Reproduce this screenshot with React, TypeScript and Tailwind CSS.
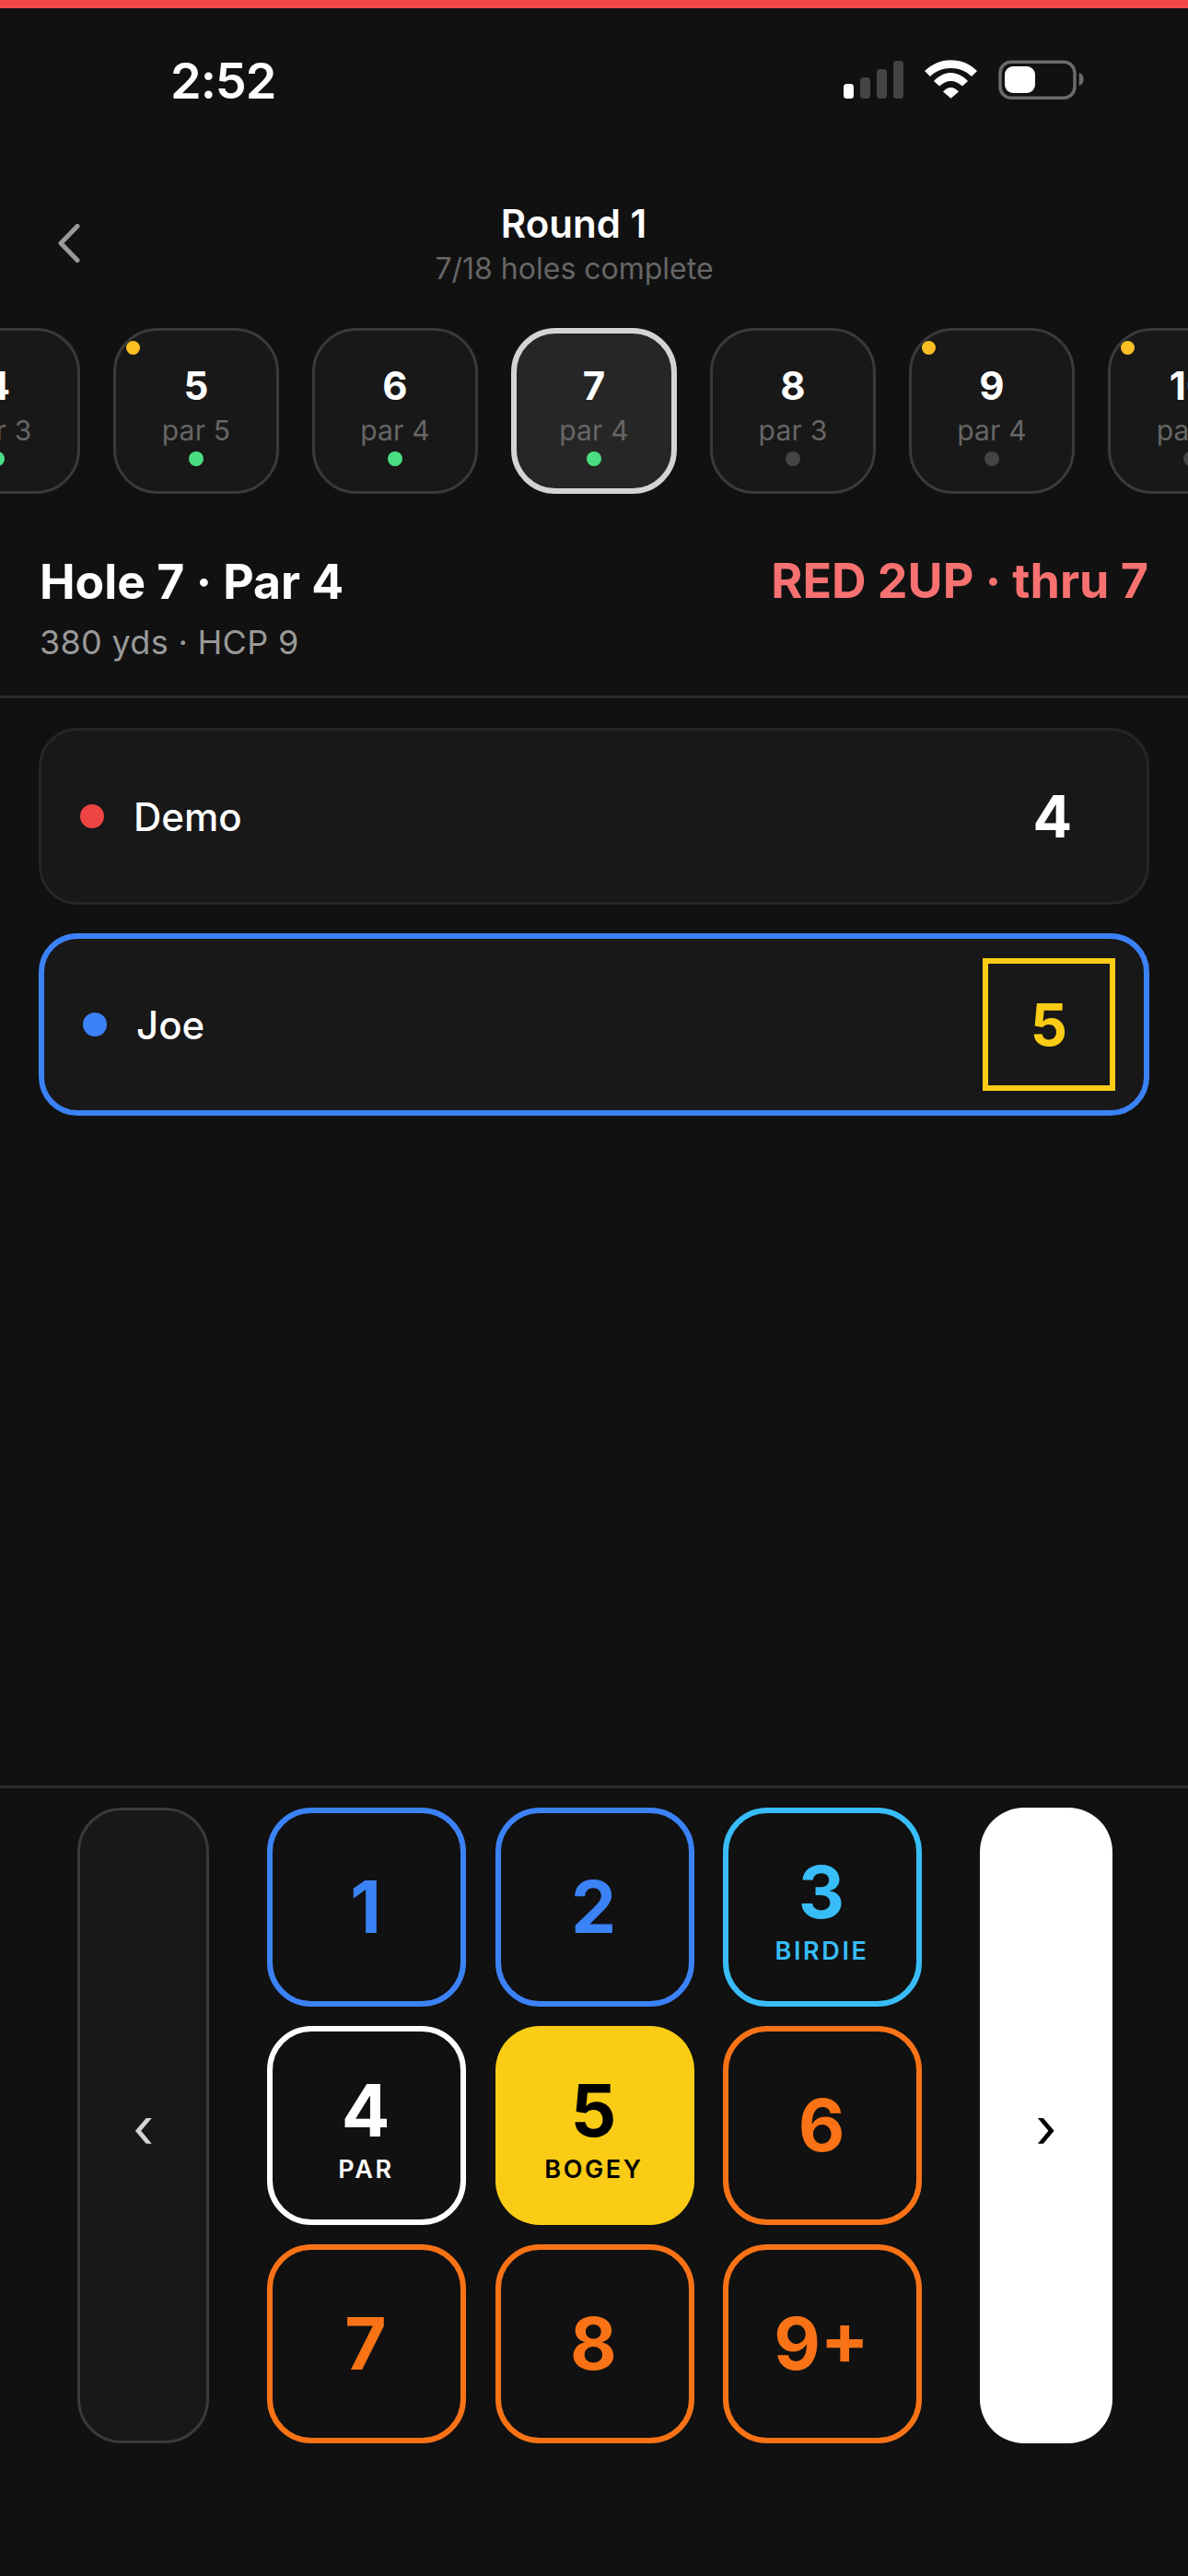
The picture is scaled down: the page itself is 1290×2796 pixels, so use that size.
const holes = [
  { n: '4', par: 'par 3', flag: false, done: true },
  { n: '5', par: 'par 5', flag: true, done: true },
  { n: '6', par: 'par 4', flag: false, done: true },
  { n: '7', par: 'par 4', flag: false, done: true, active: true },
  { n: '8', par: 'par 3', flag: false, done: false },
  { n: '9', par: 'par 4', flag: true, done: false },
  { n: '10', par: 'par 5', flag: true, done: false },
];

function HoleTile({ h }: { h: (typeof holes)[number] }) {
  return (
    <div
      className={
        h.active
          ? 'relative flex h-[180px] w-[180px] shrink-0 flex-col items-center rounded-[48px] border-[6px] border-[#d4d4d4] bg-[#262626] pt-[30px]'
          : 'relative flex h-[180px] w-[180px] shrink-0 flex-col items-center rounded-[48px] border-[3px] border-[#3a3a3a] bg-[#181818] pt-[33px]'
      }
    >
      {h.flag && <span className="absolute left-[11px] top-[11px] h-[15px] w-[15px] rounded-full bg-[#fbbf24]" />}
      <span className="text-[42px] font-bold leading-[54px] text-white">{h.n}</span>
      <span className="mt-[3px] text-[30px] leading-[36px] tracking-[0.2px] text-[#666666]">{h.par}</span>
      <span className={h.done ? 'mt-[5px] h-[16px] w-[16px] rounded-full bg-[#4ade80]' : 'mt-[5px] h-[16px] w-[16px] rounded-full bg-[#444444]'} />
    </div>
  );
}

function Key({ n, label, cls, labelCls }: { n: string; label?: string; cls: string; labelCls?: string }) {
  return (
    <div className={'flex h-[216px] w-[216px] flex-col items-center justify-center rounded-[48px] ' + (label ? 'pt-[7px] ' : '') + cls}>
      <span className="pr-[2px] text-[78px] font-bold leading-[78px]">{n}</span>
      {label && <span className={'mt-[10px] pr-[1px] text-[27px] font-semibold leading-[30px] tracking-[2.6px] ' + labelCls}>{label}</span>}
    </div>
  );
}

export default function App() {
  return (
    <div className="flex h-[2796px] w-[1290px] flex-col overflow-hidden bg-[#111111] text-white [font-family:Inter,'Liberation_Sans',sans-serif]">
      <div className="h-[9px] shrink-0 bg-[#f34848]" />

      <div className="flex h-[186px] shrink-0 items-start justify-between pl-[185px] pr-[112px] pt-[46px]">
        <span className="text-[54px] font-semibold leading-[66px] tracking-[-1px]">2:52</span>
        <svg width="262" height="44" viewBox="0 0 262 44" className="mt-[10px]">
          <rect x="0" y="26" width="11" height="16" rx="3.5" fill="#fff" />
          <rect x="18" y="19" width="11" height="23" rx="3.5" fill="#444" />
          <rect x="36" y="10" width="11" height="32" rx="3.5" fill="#444" />
          <rect x="54" y="1" width="11" height="41" rx="3.5" fill="#444" />
          <path d="M88 12 L94 18 C100 12 108 9 116.500 9 C125 9 133 12 139 18 L145 12 C137 4 127 0.300 116.500 0.300 C106 0.300 96 4 88 12 Z" fill="#fff" />
          <path d="M98 23 L104 28.500 C108 25 112 23 116.500 23 C121 23 125 25 129 28.500 L135 23 C130 17.500 123 14 116.500 14 C110 14 103 17.500 98 23 Z" fill="#fff" />
          <path d="M108 34.500 C110.500 32 113.500 30 116.500 30 C119.500 30 122.500 32 125 34.500 L116.500 41.700 Z" fill="#fff" />
          <rect x="170" y="2.300" width="81" height="39" rx="12" fill="none" stroke="#6b6b6b" strokeWidth="3.500" />
          <rect x="175" y="7" width="33" height="29" rx="9" fill="#fff" />
          <path d="M255.700 14 C259.500 15 260.700 18.500 260.700 21 C260.700 23.500 259.500 27 255.700 28 Z" fill="#6b6b6b" />
        </svg>
      </div>

      <div className="relative flex h-[130px] shrink-0 flex-col items-center pr-[43px] pt-[24px]">
        <svg width="36" height="42" viewBox="0 0 36 42" className="absolute left-[54px] top-[48px]" fill="none">
          <path d="M30 2.500 L12 21 L30 39.500" stroke="#999999" strokeWidth="5" strokeLinecap="round" strokeLinejoin="round" />
        </svg>
        <span className="pr-[1px] text-[42px] font-semibold leading-[48px]">Round 1</span>
        <span className="mt-[7px] text-[32px] leading-[36px] text-[#666666]">7/18 holes complete</span>
      </div>

      <div className="-ml-[93px] flex shrink-0 gap-[36px] pt-[31px]">
        {holes.map((h) => (
          <HoleTile key={h.n} h={h} />
        ))}
      </div>

      <div className="flex shrink-0 items-start justify-between border-b-[3px] border-[#2a2a2a] px-[43px] pb-[35px] pt-[65px]">
        <div>
          <div className="text-[51.700px] font-bold leading-[60px]">Hole 7 · Par 4</div>
          <div className="mt-[14px] text-[36px] leading-[45px] tracking-[0.3px] text-[#999999]">380 yds · HCP 9</div>
        </div>
        <div className="text-[52px] font-bold leading-[60px] text-[#f87171]">RED 2UP · thru 7</div>
      </div>

      <div className="flex flex-1 flex-col gap-[31px] px-[42px] pt-[32px]">
        <div className="flex h-[192px] items-center justify-between rounded-[42px] border-[3px] border-[#262626] bg-[#181818] pl-[42px] pr-[81px]">
          <div className="flex items-center gap-[32px]">
            <span className="h-[26px] w-[26px] rounded-full bg-[#ef4444]" />
            <span className="text-[42px] font-medium">Demo</span>
          </div>
          <span className="text-[63px] font-bold">4</span>
        </div>
        <div className="flex h-[198px] items-center justify-between rounded-[42px] border-[6px] border-[#3b82f6] bg-[#181818] pl-[42px] pr-[31px]">
          <div className="flex items-center gap-[32px]">
            <span className="h-[26px] w-[26px] rounded-full bg-[#3b82f6]" />
            <span className="text-[42px] font-medium">Joe</span>
          </div>
          <div className="flex h-[144px] w-[144px] items-center justify-center border-[6px] border-[#facc15] text-[63px] font-bold text-[#facc15]">5</div>
        </div>
      </div>

      <div className="flex h-[858px] shrink-0 gap-[63px] border-t-[3px] border-[#2a2a2a] pl-[84px] pt-[21px]">
        <div className="flex h-[690px] w-[143px] items-center justify-center rounded-[48px] border-[3px] border-[#3a3a3a] bg-[#181818] pt-[3px] text-[60px] text-[#d4d4d4]">‹</div>
        <div className="grid h-[690px] grid-cols-[216px_216px_216px] gap-x-[31.5px] gap-y-[21px]">
          <Key n="1" cls="border-[6px] border-[#3b82f6] text-[#3b82f6]" />
          <Key n="2" cls="border-[6px] border-[#3b82f6] text-[#3b82f6]" />
          <Key n="3" label="BIRDIE" cls="border-[6px] border-[#38bdf8] text-[#38bdf8]" labelCls="text-[#38bdf8]" />
          <Key n="4" label="PAR" cls="border-[6px] border-white text-white" labelCls="text-white" />
          <Key n="5" label="BOGEY" cls="bg-[#facc15] text-black" labelCls="text-black" />
          <Key n="6" cls="border-[6px] border-[#f97316] text-[#f97316]" />
          <Key n="7" cls="border-[6px] border-[#f97316] text-[#f97316]" />
          <Key n="8" cls="border-[6px] border-[#f97316] text-[#f97316]" />
          <Key n="9+" cls="border-[6px] border-[#f97316] text-[#f97316]" />
        </div>
        <div className="flex h-[690px] w-[144px] items-center justify-center rounded-[48px] bg-white pt-[3px] text-[60px] text-black">›</div>
      </div>
    </div>
  );
}
